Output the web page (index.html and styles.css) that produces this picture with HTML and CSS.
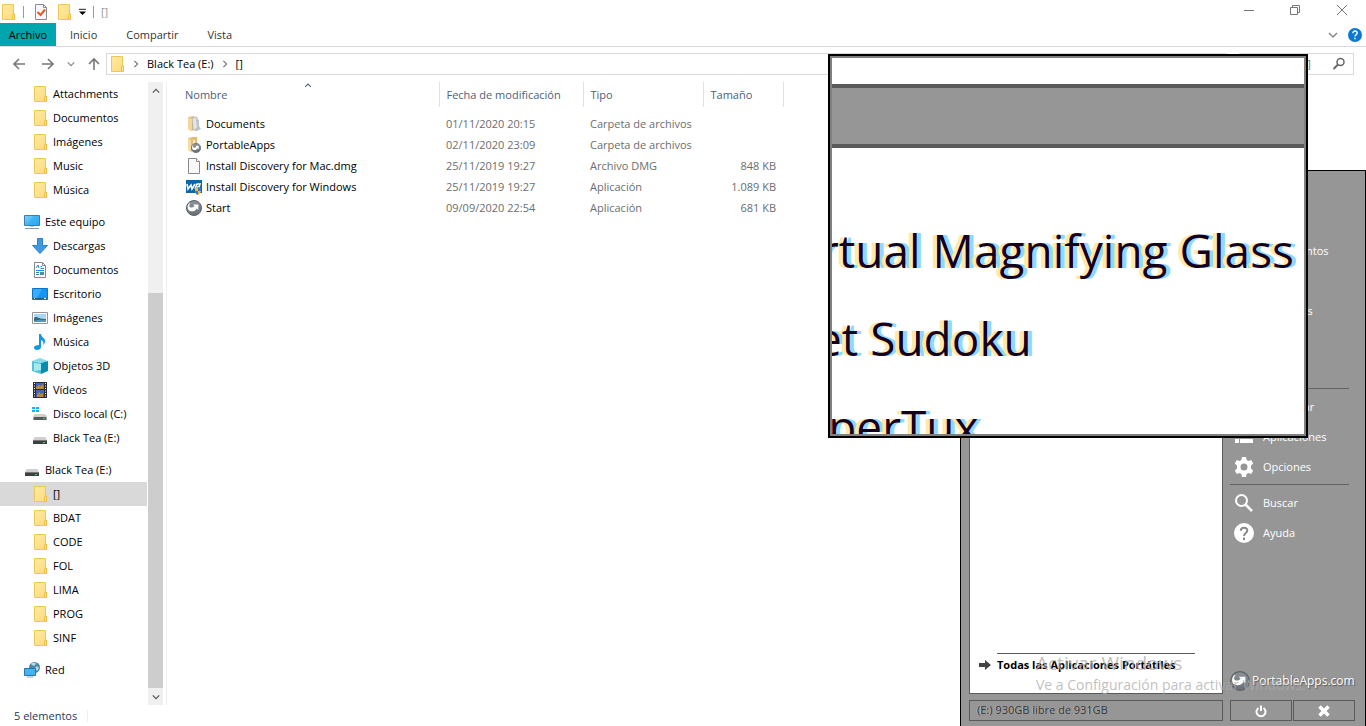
FILE: index.html
```html
<!DOCTYPE html>
<html lang="es">
<head>
<meta charset="utf-8">
<title>[]</title>
<link rel="stylesheet" href="styles.css">
</head>
<body>
<svg class="defs" aria-hidden="true">
  <defs>
    <linearGradient id="gFolder" x1="0" y1="0" x2="1" y2="1"><stop offset="0" stop-color="#ffe9a2"/><stop offset="1" stop-color="#fddc7c"/></linearGradient>
    <linearGradient id="gScreen" x1="0" y1="0" x2="1" y2="1"><stop offset="0" stop-color="#7fd3fb"/><stop offset="1" stop-color="#1b9df0"/></linearGradient>
    <linearGradient id="gDrive" x1="0" y1="0" x2="0" y2="1"><stop offset="0" stop-color="#d8d8d8"/><stop offset="1" stop-color="#8a8a8a"/></linearGradient>
    <linearGradient id="gBall" x1="0" y1="0" x2="0" y2="1"><stop offset="0" stop-color="#8d9499"/><stop offset="1" stop-color="#686f75"/></linearGradient>
    <symbol id="folder" viewBox="0 0 16 16"><path d="M2.500.5h11v10.500h-1v4.500h-10z" fill="url(#gFolder)" stroke="#eec854"/><path d="M12.500 15.500v-4l1-1.500h1v5.500z" fill="#ffe794" stroke="#eabf40"/></symbol>
    <symbol id="pc" viewBox="0 0 16 16"><path d="M.5 1.500h15v10h-15z" fill="url(#gScreen)" stroke="#3d7ea8"/><path d="M9 2l-5 9h11V2z" fill="#35adf5" opacity=".6"/><path d="M6 12h4v1H6z" fill="#b9cbd6"/><path d="M1 14.500h14" stroke="#7c9db3"/></symbol>
    <symbol id="down" viewBox="0 0 16 16"><path d="M5.500.5h5v7h5L8 15.500.5 7.500h5z" fill="#3f98e6" stroke="#2c80cb"/></symbol>
    <symbol id="doc" viewBox="0 0 16 16"><path d="M2.500.5h8l3 3v12h-11z" fill="#fff" stroke="#888"/><path d="M10.500.5v3h3" fill="none" stroke="#888"/><path d="M4 6l2-3 1 3M8.500 4.500H10M8.500 6.500H12M4 8.500h8M4 10.500h3M4 12.500h3" stroke="#2c8ac0" fill="none"/><path d="M8 10h4v3H8z" fill="#5d8799"/></symbol>
    <symbol id="desk" viewBox="0 0 16 16"><path d="M.5 2.500h15v11H.5z" fill="#1495f4" stroke="#0874c6"/><path d="M1 3h9L5 12H1z" fill="#36abff"/><path d="M1 12.500h14" stroke="#075f9e"/><path d="M2 12.500h1m9 0h2" stroke="#fff"/></symbol>
    <symbol id="img" viewBox="0 0 16 16"><path d="M.5 2.500h15v11H.5z" fill="#fff" stroke="#949494"/><path d="M2 4h12v8H2z" fill="#a8d5f1"/><path d="M2 8c2-3 4 1 12 1v3H2z" fill="#396a70"/><path d="M2 11c5-2 8-1 12-1v2H2z" fill="#5598b5"/></symbol>
    <symbol id="music" viewBox="0 0 16 16"><path d="M7 0h2c0 3 4 4 4 7 0 2-1 3-2 4 1-3 0-4-2-5v7c0 2-2 3-4 3s-3-1-3-2.500S4 11 7 11z" fill="#0d96ea"/></symbol>
    <symbol id="cube" viewBox="0 0 16 16"><path d="M0 3l8-3 8 3-7 2z" fill="#83dce8"/><path d="M0 3l9 2v11l-9-3z" fill="#55c3d7"/><path d="M9 5l7-2v10l-7 3z" fill="#078db4"/><path d="M2 5l7 1v6l-7 1z" fill="#a6eaf1"/></symbol>
    <symbol id="video" viewBox="0 0 16 16"><path d="M1 0h14v16H1z" fill="#2b2b30"/><path d="M4 1h8v6H4zM4 8h8v7H4z" fill="#4165bd"/><path d="M4 5l3-2 2 1 2-2 1 5H4zM5 13l2-3 2 2 2-1v4H5z" fill="#b98839"/><path d="M2.500 1v15M13.500 1v15" stroke="#fff" stroke-dasharray="1 1.500"/></symbol>
    <symbol id="drive" viewBox="0 0 16 16"><path d="M3 7h10l2 3H1z" fill="#cfcfcf"/><path d="M1 10h14v4H1z" fill="#3d3f40"/><path d="M1 10h14v1H1z" fill="#777"/><path d="M11 12h2v1h-2z" fill="#3ce24d"/></symbol>
    <symbol id="sysdrive" viewBox="0 0 16 16"><path d="M0 1h3v2H0zM4 1h3v2H4zM0 4h3v2H0zM4 4h3v2H4z" fill="#13b1ed"/><path d="M3 8h10l2 2H1z" fill="#cfcfcf"/><path d="M1 10h14v4H1z" fill="url(#gDrive)"/><path d="M2 11h12v3H2z" fill="#55595a"/><path d="M11 12h2v1h-2z" fill="#3ce24d"/></symbol>
    <symbol id="net" viewBox="0 0 16 16"><circle cx="10.500" cy="5.500" r="5.500" fill="#4b88a5"/><path d="M7 2c2-2 5-1 5 0l-2 2-2-1zM13 4l2 2-2 3-2-3z" fill="#b8d7e1"/><path d="M.5 6.500h11v7H.5z" fill="#44b3f1" stroke="#2878ad"/><path d="M3 15h6" stroke="#8ba8ba"/></symbol>
    <symbol id="arrowball" viewBox="0 0 16 16"><circle cx="8" cy="8" r="7.500" fill="url(#gBall)" stroke="#5a6065"/><path d="M3 3.500C1.500 5 1.200 8 2.500 10c2 2.200 6.500 1.800 8.300-1.500l1.500 1.500V4.500H7l1.500 1.600C7 8 4 8 3.400 6.500 3 5.500 3.500 4.300 4.500 3z" fill="#fff"/></symbol>
    <symbol id="docs" viewBox="0 0 16 16"><path d="M2 1l6-1v14l-3 1-3-2z" fill="#e9c077"/><path d="M6 2l5-1 1 11-5 2z" fill="#e4e4e4" stroke="#a5a5a5" stroke-width=".7"/><path d="M10 3l3 1v6l2 3-4 2H8l3-3z" fill="#bfc4c8"/><path d="M2 1l4 2v12l-4-2z" fill="#f5d797"/></symbol>
    <symbol id="papps" viewBox="0 0 16 16"><path d="M2 1l5-1h4v10l-6 5-3-2z" fill="#e3bb72"/><path d="M2 1l3 2v12l-3-2z" fill="#f7dca1"/><path d="M7 3h2v6H7z" fill="#f5ead3"/><svg x="5" y="6" width="10" height="10"><use href="#arrowball"/></svg></symbol>
    <symbol id="blank" viewBox="0 0 16 16"><path d="M2.500.5h8l3 3v12h-11z" fill="#f8f8f8" stroke="#8a8a8a"/><path d="M10.500.5v3h3" fill="#fff" stroke="#8a8a8a"/></symbol>
    <symbol id="wd" viewBox="0 0 16 16"><path d="M0 1h16v13H0z" fill="#0b66ab"/><path d="M1 5l1 5 3-4 1 4 3-5M9 10l2-5h3l-1 3h-2" fill="none" stroke="#fff" stroke-width="1.600"/><path d="M9 9l3-1 3 1v3c0 2-3 4-3 4s-3-2-3-4z" fill="#f5bd2d"/><path d="M12 8l3 1v3h-3zM9 12h3v4c-2-1-3-2-3-4z" fill="#347ec5"/></symbol>
    <symbol id="chev" viewBox="0 0 10 10"><path d="M1 3l4 4 4-4" fill="none" stroke="currentColor" stroke-width="1.500"/></symbol>
  </defs>
</svg>

<main class="explorer">
  <header class="titlebar">
    <svg class="ico"><use href="#folder"/></svg><i class="bar"></i>
    <button class="plain" aria-label="Propiedades"><svg class="ico" viewBox="0 0 16 16"><path d="M2.500.5h8l3 3v12h-11z" fill="#f7f7fa" stroke="#8c8c96"/><path d="M10.500.5v3h3" fill="none" stroke="#8c8c96"/><path d="M4.500 8l3 3L12 5.500" fill="none" stroke="#e65b26" stroke-width="2"/></svg></button>
    <button class="plain" aria-label="Nueva carpeta"><svg class="ico"><use href="#folder"/></svg></button>
    <button class="plain" aria-label="Personalizar"><svg class="mini" viewBox="0 0 8 8"><path d="M0 1.500h8" stroke="#000"/><path d="M0 4h8L4 8z"/></svg></button>
    <i class="bar"></i><span class="caption">[]</span>
    <div class="controls">
      <button class="plain" aria-label="Minimizar"><svg viewBox="0 0 12 12"><path d="M1 6.500h10" stroke="#777"/></svg></button>
      <button class="plain" aria-label="Restaurar"><svg viewBox="0 0 12 12"><path d="M1.500 3.500h7v7h-7zM3.500 3V1.500h7v7H9" fill="none" stroke="#777"/></svg></button>
      <button class="plain" aria-label="Cerrar"><svg viewBox="0 0 12 12"><path d="M1 1l10 10M11 1L1 11" stroke="#777"/></svg></button>
    </div>
  </header>
  <nav class="ribbon">
    <button class="tab file">Archivo</button><button class="tab">Inicio</button><button class="tab">Compartir</button><button class="tab">Vista</button>
    <div class="help"><button class="plain grey" aria-label="Expandir"><svg class="mini"><use href="#chev"/></svg></button><button class="plain" aria-label="Ayuda"><svg class="round" viewBox="0 0 14 14"><circle cx="7" cy="7" r="7" fill="#0a78d4"/><path d="M4.900 5.200c0-3 4.400-2.700 4.300-.2C9.200 6.600 7 6.600 7 8.500M7 9.700v1.600" fill="none" stroke="#fff" stroke-width="1.500"/></svg></button></div>
  </nav>
  <div class="addressrow">
    <div class="arrows">
      <button class="plain" aria-label="Atrás"><svg class="arrow" viewBox="0 0 14 14"><path d="M13 7H2M7 2L2 7l5 5" fill="none" stroke="#777" stroke-width="1.600"/></svg></button>
      <button class="plain" aria-label="Adelante"><svg class="arrow" viewBox="0 0 14 14"><path d="M1 7h11M7 2l5 5-5 5" fill="none" stroke="#777" stroke-width="1.600"/></svg></button>
      <button class="plain grey" aria-label="Recientes"><svg class="tiny"><use href="#chev"/></svg></button>
      <button class="plain" aria-label="Arriba"><svg class="arrow" viewBox="0 0 14 14"><path d="M7 13V2M2 7l5-5 5 5" fill="none" stroke="#777" stroke-width="1.600"/></svg></button>
    </div>
    <div class="address">
      <svg class="ico"><use href="#folder"/></svg><svg class="crumb"><use href="#chev"/></svg><a href="#e">Black Tea (E:)</a><svg class="crumb"><use href="#chev"/></svg><a href="#b">[]</a>
    </div>
    <div class="search"><input type="text" placeholder="Buscar en []" aria-label="Buscar en []"><svg class="glass" viewBox="0 0 14 14"><circle cx="8.500" cy="5" r="3.500" fill="none" stroke="#666" stroke-width="1.500"/><path d="M6 7.500L1.500 12" stroke="#666" stroke-width="2"/></svg></div>
  </div>

  <div class="body">
    <nav class="tree">
      <ul>
        <li><a href="#a"><svg class="ico"><use href="#folder"/></svg>Attachments</a></li>
        <li><a href="#a"><svg class="ico"><use href="#folder"/></svg>Documentos</a></li>
        <li><a href="#a"><svg class="ico"><use href="#folder"/></svg>Imágenes</a></li>
        <li><a href="#a"><svg class="ico"><use href="#folder"/></svg>Music</a></li>
        <li><a href="#a"><svg class="ico"><use href="#folder"/></svg>Música</a></li>
      </ul>
      <ul>
        <li><a class="root" href="#a"><svg class="ico"><use href="#pc"/></svg>Este equipo</a></li>
        <li><a href="#a"><svg class="ico"><use href="#down"/></svg>Descargas</a></li>
        <li><a href="#a"><svg class="ico"><use href="#doc"/></svg>Documentos</a></li>
        <li><a href="#a"><svg class="ico"><use href="#desk"/></svg>Escritorio</a></li>
        <li><a href="#a"><svg class="ico"><use href="#img"/></svg>Imágenes</a></li>
        <li><a href="#a"><svg class="ico"><use href="#music"/></svg>Música</a></li>
        <li><a href="#a"><svg class="ico"><use href="#cube"/></svg>Objetos 3D</a></li>
        <li><a href="#a"><svg class="ico"><use href="#video"/></svg>Vídeos</a></li>
        <li><a href="#a"><svg class="ico"><use href="#sysdrive"/></svg>Disco local (C:)</a></li>
        <li><a href="#a"><svg class="ico"><use href="#drive"/></svg>Black Tea (E:)</a></li>
      </ul>
      <ul>
        <li><a class="root" href="#a"><svg class="ico"><use href="#drive"/></svg>Black Tea (E:)</a></li>
        <li><a class="current" href="#a"><svg class="ico"><use href="#folder"/></svg>[]</a></li>
        <li><a href="#a"><svg class="ico"><use href="#folder"/></svg>BDAT</a></li>
        <li><a href="#a"><svg class="ico"><use href="#folder"/></svg>CODE</a></li>
        <li><a href="#a"><svg class="ico"><use href="#folder"/></svg>FOL</a></li>
        <li><a href="#a"><svg class="ico"><use href="#folder"/></svg>LIMA</a></li>
        <li><a href="#a"><svg class="ico"><use href="#folder"/></svg>PROG</a></li>
        <li><a href="#a"><svg class="ico"><use href="#folder"/></svg>SINF</a></li>
      </ul>
      <ul>
        <li><a class="root" href="#a"><svg class="ico"><use href="#net"/></svg>Red</a></li>
      </ul>
    </nav>
    <div class="scroll">
      <button class="plain" aria-label="Subir"><svg class="tiny up"><use href="#chev"/></svg></button>
      <div class="track"><div class="thumb"></div></div>
      <button class="plain" aria-label="Bajar"><svg class="tiny"><use href="#chev"/></svg></button>
    </div>
    <section class="files">
      <table>
        <thead><tr><th class="c1">Nombre<svg class="sort up"><use href="#chev"/></svg></th><th class="c2">Fecha de modificación</th><th class="c3">Tipo</th><th class="c4">Tamaño</th></tr></thead>
        <tbody>
          <tr><td><span class="name"><svg class="ico"><use href="#docs"/></svg>Documents</span></td><td>01/11/2020 20:15</td><td>Carpeta de archivos</td><td></td></tr>
          <tr><td><span class="name"><svg class="ico"><use href="#papps"/></svg>PortableApps</span></td><td>02/11/2020 23:09</td><td>Carpeta de archivos</td><td></td></tr>
          <tr><td><span class="name"><svg class="ico"><use href="#blank"/></svg>Install Discovery for Mac.dmg</span></td><td>25/11/2019 19:27</td><td>Archivo DMG</td><td>848 KB</td></tr>
          <tr><td><span class="name"><svg class="ico"><use href="#wd"/></svg>Install Discovery for Windows</span></td><td>25/11/2019 19:27</td><td>Aplicación</td><td>1.089 KB</td></tr>
          <tr><td><span class="name"><svg class="ico"><use href="#arrowball"/></svg>Start</span></td><td>09/09/2020 22:54</td><td>Aplicación</td><td>681 KB</td></tr>
        </tbody>
      </table>
    </section>
  </div>
  <footer class="status"><span>5 elementos</span></footer>
</main>

<aside class="launcher">
  <div class="left">
    <div class="apps"><a class="all" href="#all"><svg class="go" viewBox="0 0 12 12"><path d="M0 4h6V1l6 5-6 5V8H0z" fill="#444"/></svg><b>Todas las Aplicaciones Portátiles</b></a></div>
    <div class="space">(E:) 930GB libre de 931GB</div>
  </div>
  <div class="right">
    <nav class="menu">
      <a class="spaced" href="#m">Documentos</a>
      <a class="spaced" href="#m">Imágenes</a>
      <hr>
      <a href="#m">Respaldar</a>
      <a href="#m"><svg viewBox="0 0 20 20"><path d="M1 2h4v4H1zM6 2h13v4H6zM1 7h4v4H1zM6 7h13v4H6zM1 12h4v4H1zM6 12h13v4H6z" fill="#fff"/></svg>Aplicaciones</a>
      <a href="#m"><svg viewBox="0 0 20 20"><path fill-rule="evenodd" fill="#fff" d="M8 0h4l.6 3 1.700 1 2.900-1.100 2 3.500L17 8.500v3l2.200 2.100-2 3.500-2.900-1.100-1.700 1-.6 3H8l-.6-3-1.700-1-2.900 1.100-2-3.500L3 11.500v-3L.8 6.400l2-3.500L5.700 4l1.700-1zm2 6.500a3.500 3.500 0 100 7 3.500 3.500 0 000-7z"/></svg>Opciones</a>
      <hr>
      <a href="#m"><svg viewBox="0 0 20 20"><circle cx="7.500" cy="7.500" r="5.500" fill="none" stroke="#fff" stroke-width="2"/><path d="M11.500 11.500l6.500 6.500" stroke="#fff" stroke-width="2.500"/></svg>Buscar</a>
      <a href="#m"><svg viewBox="0 0 20 20"><circle cx="10" cy="10" r="10" fill="#fff"/><path d="M6.800 7.800c0-4.300 6.600-4 6.500-.3C13.300 10 10 10 10 13M10 14.500V17" fill="none" stroke="#8a8a8a" stroke-width="2"/></svg>Ayuda</a>
    </nav>
    <a class="brand" href="#p"><svg viewBox="0 0 16 16"><use href="#arrowball"/></svg><span>PortableApps.com</span></a>
    <div class="actions">
      <button aria-label="Apagar"><svg viewBox="0 0 12 12"><path d="M3.500 3a4.500 4.500 0 105 0M6 .5V6" fill="none" stroke="#fff" stroke-width="2"/></svg></button>
      <button aria-label="Cerrar menú"><svg viewBox="0 0 12 12"><path d="M1.500 1.500l9 9M10.500 1.500l-9 9" stroke="#fff" stroke-width="3.500"/></svg></button>
    </div>
  </div>
</aside>

<div class="watermark"><p class="big">Activar Windows</p><p>Ve a Configuración para activar Windows.</p></div>

<section class="lens">
  <div class="band"></div>
  <div class="zoomed"><p class="cut1">rtual Magnifying Glass</p><p class="cut2">et Sudoku</p><p class="cut3">uperTux</p></div>
</section>
</body>
</html>
```
FILE: styles.css
```css
* { box-sizing: border-box; }
body { margin: 0; height: 100vh; position: relative; overflow: hidden; background: #fff; color: #000; font: 11px/16px "Open Sans", "Noto Sans", sans-serif; }
a { color: inherit; text-decoration: none; }
p, ul { margin: 0; padding: 0; list-style: none; }
button, input { font: inherit; color: inherit; }
svg { display: block; flex: none; }
.defs { position: absolute; width: 0; height: 0; }
.plain { border: 0; padding: 0; background: none; display: flex; align-items: center; justify-content: center; }
.ico { width: 16px; height: 16px; }
.mini { width: 10px; height: 10px; }
.tiny { width: 8px; height: 8px; }
.up { transform: rotate(180deg); }
.grey { color: #888; }

.explorer { height: 100%; display: flex; flex-direction: column; }
.titlebar { height: 23px; display: flex; align-items: center; }
.titlebar .mini { width: 7px; height: 7px; }
.titlebar .bar { width: 1px; height: 12px; background: #999; margin: 0 9px 0 7px; }
.titlebar .plain { margin-right: 7px; }
.titlebar .plain + .bar { margin: 0 7px 0 0; }
.caption { color: #999; }
.controls { margin-left: auto; display: flex; padding-bottom: 3px; }
.controls .plain { width: 46px; margin: 0; }
.controls svg { width: 12px; height: 12px; }
.controls .plain:last-child { width: 48px; }

.ribbon { height: 24px; display: flex; border-bottom: 1px solid #dadbdc; color: #333; }
.tab { border: 0; background: none; padding: 0 15px 0 14px; }
.tab.file { background: #00a5ad; color: #000; width: 56px; padding: 0 8px; }
.help { margin-left: auto; display: flex; align-items: center; gap: 10px; padding-right: 4px; }
.round { width: 14px; height: 14px; }

.addressrow { display: flex; gap: 12px; padding: 6px 12px 7px 0; }
.arrows { display: flex; align-items: center; gap: 15px; width: 94px; padding-left: 12px; }
.arrow { width: 14px; height: 14px; }
.arrows .grey { margin: 0 -3px; }
.address { flex: 1; height: 22px; border: 1px solid #d9d9d9; display: flex; align-items: center; padding-left: 2px; }
.crumb { width: 8px; height: 8px; margin: 0 7px; transform: rotate(-90deg); color: #777; }
.search { width: 115px; height: 22px; border: 1px solid #d9d9d9; display: flex; align-items: center; padding: 0 7px 0 10px; }
.search input { border: 0; padding: 0; background: none; flex: 1; min-width: 0; outline: 0; }
.search input::placeholder { color: #6d6d6d; opacity: 1; }
.glass { width: 14px; height: 14px; }

.body { flex: 1; min-height: 0; display: flex; }
.tree { width: 147px; }
.tree ul { margin-bottom: 8px; }
.tree a { height: 24px; display: flex; align-items: center; gap: 5px; padding-left: 32px; }
.tree a.root { padding-left: 24px; }
.tree a.current { background: #d9d9d9; }
.scroll { width: 15px; margin-left: 1px; background: #f0f0f0; display: flex; flex-direction: column; color: #555; }
.scroll .plain { height: 17px; }
.track { flex: 1; display: flex; align-items: flex-end; }
.thumb { width: 15px; height: 67%; background: #cdcdcd; }
.files { flex: 1; margin-left: 3px; border-left: 1px solid #f0f0f0; padding-left: 10px; }
table { border-collapse: collapse; table-layout: fixed; width: 606px; color: #6d6d6d; }
th { position: relative; height: 25px; text-align: left; font-weight: 400; color: #4c607a; border-right: 1px solid #e2e2e2; padding: 0 6px 0 7px; }
th:first-child { padding-left: 8px; }
td:first-child { padding-left: 9px; }
.sort { position: absolute; left: 48%; top: 0; width: 10px; height: 7px; }
.c1 { width: 262px; } .c2 { width: 144px; } .c3 { width: 120px; } .c4 { width: 80px; }
td { height: 21px; padding: 0 0 0 7px; }
tbody::before { content: ""; display: block; height: 6px; }
td:last-child { text-align: right; padding-right: 7px; }
.name { display: flex; align-items: center; gap: 4px; color: #000; }
.status { height: 21px; display: flex; align-items: center; color: #1e395b; padding-left: 14px; }
.status span { padding-right: 10px; border-right: 1px solid #eee; line-height: 12px; }

.launcher { position: absolute; left: 960px; right: 0; top: 170px; bottom: 0; background: #969696; border: 1px solid #000; border-bottom: 0; display: flex; gap: 7px; padding: 8px 10px 5px 8px; }
.left { flex: 1; display: flex; flex-direction: column; gap: 6px; }
.apps { flex: 1; background: #fff; border: 1px solid #5a5a5a; display: flex; align-items: flex-end; padding: 0 27px 20px 9px; }
.all { flex: 1; display: flex; align-items: center; gap: 6px; }
.all b { flex: 1; border-top: 1px solid #5a5a5a; padding-top: 3px; white-space: nowrap; }
.go { width: 12px; height: 12px; margin-top: 4px; }
.space { height: 21px; border: 1px solid #5a5a5a; padding: 1px 7px; color: #333; text-shadow: -1px 0 #b5b5b5; }
.right { width: 125px; display: flex; flex-direction: column; }
.menu { color: #fff; padding-top: 57px; margin-bottom: auto; }
.menu a { height: 30px; display: flex; align-items: center; gap: 9px; padding-left: 4px; }
.menu a svg { width: 20px; height: 20px; }
.menu a:not(:has(svg)) { padding-left: 33px; }
.menu .spaced { margin-bottom: 30px; }
.menu hr { border: 0; border-top: 1px solid #646464; margin: 2px 6px 3px 0; }
.menu .spaced + hr { margin-top: 62px; }
.brand { display: flex; align-items: center; gap: 2px; color: #fff; font-size: 12px; text-shadow: 1px 1px 1px #555; margin-bottom: 9px; }
.brand svg { width: 20px; height: 20px; }
.actions { display: flex; gap: 1px; height: 21px; }
.actions button { flex: 1; background: none; border: 1px solid #5a5a5a; padding: 0; display: flex; align-items: center; justify-content: center; }
.actions svg { width: 12px; height: 12px; }

.watermark { position: absolute; right: 54px; bottom: 30px; width: 276px; color: rgba(170, 170, 170, .75); font-size: 14px; line-height: 22px; white-space: nowrap; pointer-events: none; }
.watermark .big { font-size: 19px; }

.lens { position: absolute; left: 828px; top: 54px; width: 480px; height: 384px; border: 2px solid #000; outline: 2px solid #808080; outline-offset: -4px; background: #fff; padding: 28px 2px 2px; overflow: hidden; }
.band { height: 64px; background: #969696; border: solid #5a5a5a; border-width: 4px 0; }
.zoomed { height: 286px; overflow: hidden; padding-top: 58px; font-size: 46px; line-height: 88px; color: #14001c; text-shadow: -4px 0 #ffe9a8, 4px 0 #90d8ff; white-space: nowrap; }
.cut1 { margin-left: -12px; }
.cut2 { margin-left: -16px; }
.cut3 { margin-left: -32px; }
```
